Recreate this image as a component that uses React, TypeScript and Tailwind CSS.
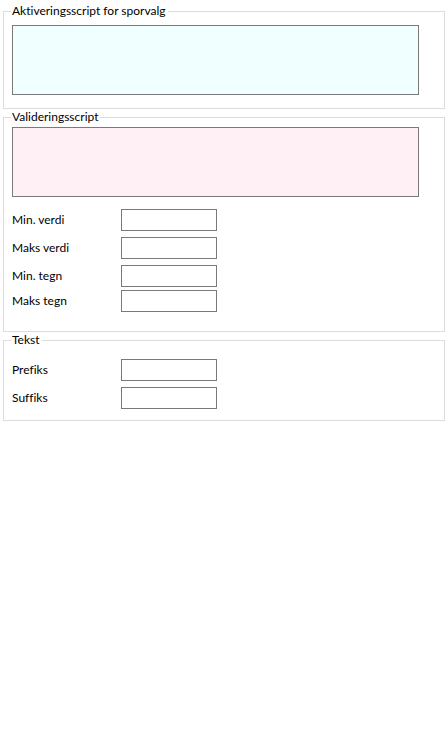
import React from "react";

const font = { fontFamily: 'Lato, "Noto Sans", sans-serif' };

function Row({ label, className = "" }: { label: string; className?: string }) {
  return (
    <div className={"flex items-center " + className}>
      <span className="w-[109px] text-[12px] leading-[16px] text-black">{label}</span>
      <div className="w-[96px] h-[22px] border border-[#7a7a7a] bg-white" />
    </div>
  );
}

export default function App() {
  return (
    <div
      className="w-[448px] h-[733px] bg-white pt-[3px] px-[3px] [font-variant-ligatures:none]"
      style={font}
    >
      <fieldset className="w-[442px] border border-[#dcdcdc] pl-[8px] pr-[25px] pt-[6px] pb-[13px]">
        <legend className="-ml-[1px] pl-[1px] pr-[2px] text-[12px] leading-[16px] text-black">
          Aktiveringsscript for sporvalg
        </legend>
        <div className="w-[407px] h-[70px] border border-[#7a7a7a] bg-[#f0ffff]" />
      </fieldset>
      <fieldset className="w-[442px] border border-[#dcdcdc] pl-[8px] pr-[25px] pt-[2px] pb-[19px]">
        <legend className="-ml-[1px] pl-[1px] pr-[2px] text-[12px] leading-[16px] text-black">
          Valideringsscript
        </legend>
        <div className="w-[407px] h-[70px] border border-[#7a7a7a] bg-[#fff0f5]" />
        <Row label="Min. verdi" className="mt-[12px]" />
        <Row label="Maks verdi" className="mt-[6px]" />
        <Row label="Min. tegn" className="mt-[6px]" />
        <Row label="Maks tegn" className="mt-[3px]" />
      </fieldset>
      <fieldset className="w-[442px] border border-[#dcdcdc] pl-[8px] pr-[25px] pt-[11px] pb-[11px]">
        <legend className="-ml-[1px] pl-[1px] pr-[2px] text-[12px] leading-[16px] text-black">
          Tekst
        </legend>
        <Row label="Prefiks" />
        <Row label="Suffiks" className="mt-[6px]" />
      </fieldset>
    </div>
  );
}
